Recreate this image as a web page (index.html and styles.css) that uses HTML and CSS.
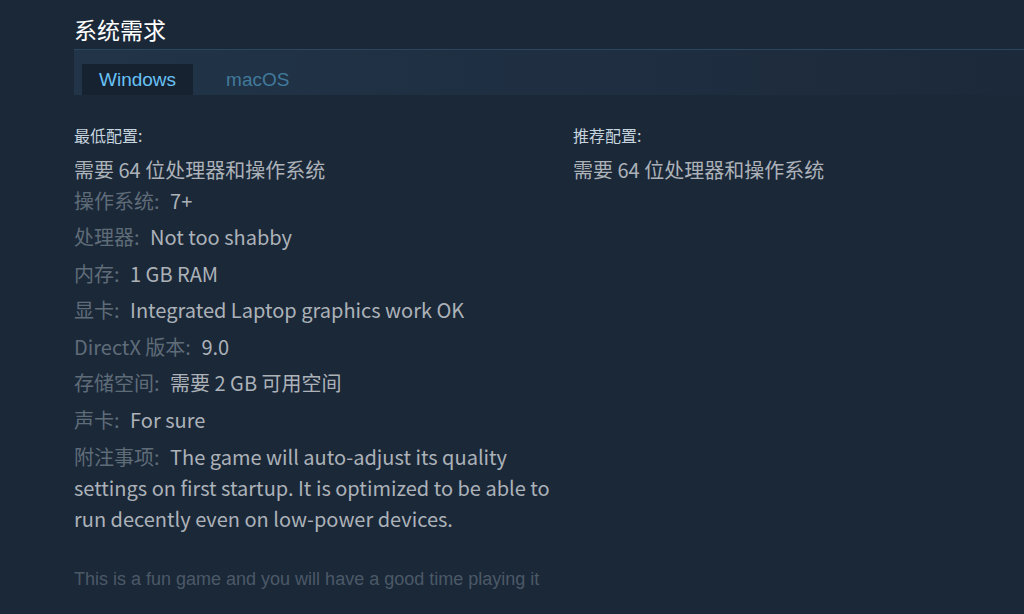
FILE: index.html
```html
<!DOCTYPE html>
<html lang="zh-cn">
<head>
    <meta charset="UTF-8">
    <title>系统需求</title>
    <link rel="stylesheet" href="styles.css">
</head>
<body>
<div class="sysreq">
    <h2 class="sysreq-title">系统需求</h2>
    <div class="sysreq-tabs">
        <span class="sysreq-tab active">Windows</span>
        <span class="sysreq-tab">macOS</span>
    </div>
    <div class="sysreq-contents">
        <div class="sysreq-col">
            <div class="col-title">最低配置:</div>
            <div class="col-note">需要 64 位处理器和操作系统</div>
            <ul class="req-list">
                <li><span class="req-label">操作系统:</span> 7+</li>
                <li><span class="req-label">处理器:</span> Not too shabby</li>
                <li><span class="req-label">内存:</span> 1 GB RAM</li>
                <li><span class="req-label">显卡:</span> Integrated Laptop graphics work OK</li>
                <li><span class="req-label">DirectX 版本:</span> 9.0</li>
                <li><span class="req-label">存储空间:</span> 需要 2 GB 可用空间</li>
                <li><span class="req-label">声卡:</span> For sure</li>
                <li><span class="req-label">附注事项:</span> The game will auto-adjust its quality settings on first startup. It is optimized to be able to run decently even on low-power devices.</li>
            </ul>
        </div>
        <div class="sysreq-col">
            <div class="col-title">推荐配置:</div>
            <div class="col-note">需要 64 位处理器和操作系统</div>
        </div>
    </div>
    <p class="sysreq-extra">This is a fun game and you will have a good time playing it</p>
</div>
</body>
</html>
```

FILE: styles.css
```css
*{
    margin: 0;
    padding: 0;
}
html,body{
    height: 100%;
    overflow: hidden;
}
body{
    background: #1b2838;
    font-family: "Noto Sans CJK SC", "Noto Sans", sans-serif;
}
.sysreq{
    padding: 17px 0 0 74px;
}
.sysreq-title{
    font-family: "Liberation Sans", "Noto Sans CJK SC", sans-serif;
    font-size: 23px;
    font-weight: normal;
    line-height: 28px;
    color: #ffffff;
    margin-bottom: 4px;
}
.sysreq-tabs{
    display: flex;
    gap: 16px;
    height: 46px;
    box-sizing: border-box;
    padding: 14px 0 0 8px;
    border-top: 1px solid #2a4760;
    background: linear-gradient(90deg, #213448 0%, #1f2e41 55%, #1c293a 100%);
}
.sysreq-tab{
    font-family: "Liberation Sans", sans-serif;
    font-size: 19px;
    line-height: 32px;
    padding: 0 17px;
    color: #417a9b;
}
.sysreq-tab.active{
    background: #172230;
    color: #67c1f5;
}
.sysreq-contents{
    display: grid;
    grid-template-columns: 480px 1fr;
    column-gap: 19px;
    padding-top: 29px;
}
.col-title{
    font-size: 16px;
    line-height: 22px;
    color: #c6d4df;
    margin-bottom: 7.5px;
}
.col-note{
    font-size: 20px;
    line-height: 31px;
    color: #acb2b8;
}
.req-list{
    list-style: none;
}
.req-list li{
    font-size: 20px;
    line-height: 31px;
    color: #acb2b8;
    margin-bottom: 5.6px;
}
.req-label{
    color: #5f6c78;
    padding-right: 6px;
}
.sysreq-extra{
    font-family: "Liberation Sans", sans-serif;
    font-size: 18px;
    line-height: 21px;
    color: #4b5967;
    margin-top: 30px;
}
```
